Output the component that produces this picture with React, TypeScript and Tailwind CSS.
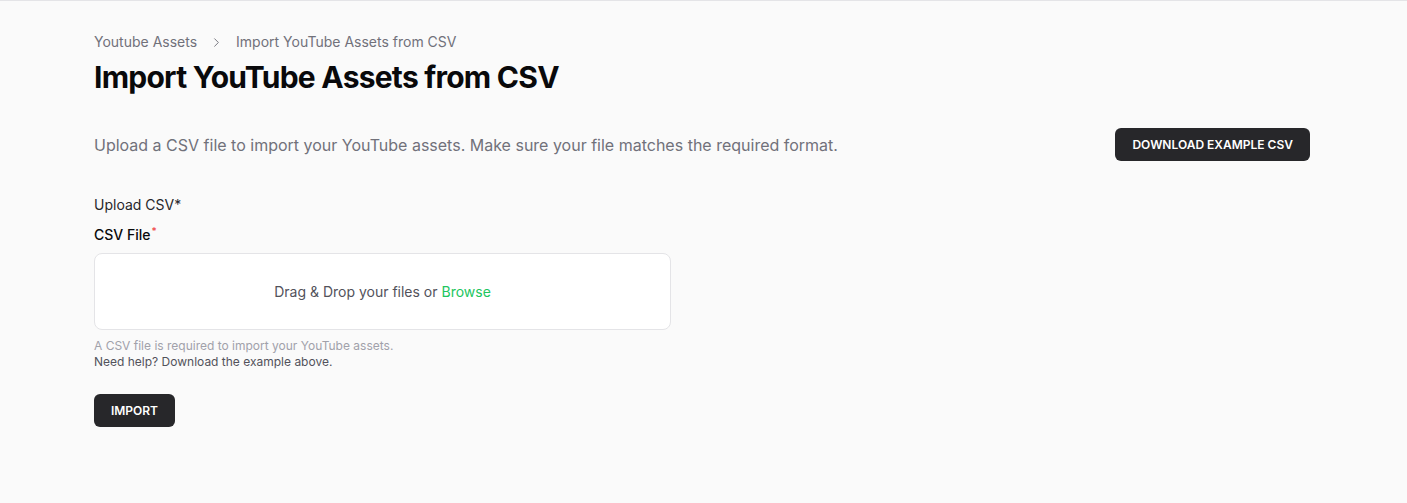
import { ChevronRight } from "lucide-react";

export default function App() {
  return (
    <div
      className="min-h-[503px] w-full bg-[#fafafa] border-t border-[#e4e4e7] text-[#09090b]"
      style={{ fontFamily: "Inter, 'Noto Sans', sans-serif" }}
    >
      <div className="pl-[94px] pr-[97px] pt-[31px]">
        {/* Breadcrumb */}
        <nav className="flex items-center gap-3 text-sm text-[#71717a] leading-5">
          <span>Youtube Assets</span>
          <ChevronRight className="w-[15px] h-[15px] text-[#71717a]" strokeWidth={1.5} />
          <span>Import YouTube Assets from CSV</span>
        </nav>

        <h1 className="mt-[7px] text-[30px] font-bold leading-9 tracking-tight">
          Import YouTube Assets from CSV
        </h1>

        <div className="mt-[33px] flex items-center justify-between">
          <p className="text-base text-[#71717a]">
            Upload a CSV file to import your YouTube assets. Make sure your file matches the required format.
          </p>
          <button className="h-[33px] px-[17px] rounded-md bg-[#27272a] text-white text-xs font-semibold uppercase">
            Download Example CSV
          </button>
        </div>

        <div className="mt-[34px] text-sm text-[#27272a] leading-5">Upload CSV*</div>

        <label className="mt-[10px] block text-sm font-medium leading-5">
          CSV File<sup className="text-[#ef4444] text-[10px] ml-[1px]">*</sup>
        </label>

        <div className="mt-[8px] w-[577px] h-[77px] rounded-lg border border-[#e4e4e7] bg-white flex items-center justify-center text-sm text-[#52525b]">
          <span>
            Drag &amp; Drop your files or <span className="text-[#22c55e]">Browse</span>
          </span>
        </div>

        <p className="mt-[8px] text-xs text-[#a1a1aa] leading-4">
          A CSV file is required to import your YouTube assets.
        </p>
        <p className="text-xs text-[#52525b] leading-4">Need help? Download the example above.</p>

        <button className="mt-[24px] h-[33px] w-[81px] rounded-md bg-[#27272a] text-white text-xs font-semibold uppercase">
          Import
        </button>
      </div>
    </div>
  );
}
